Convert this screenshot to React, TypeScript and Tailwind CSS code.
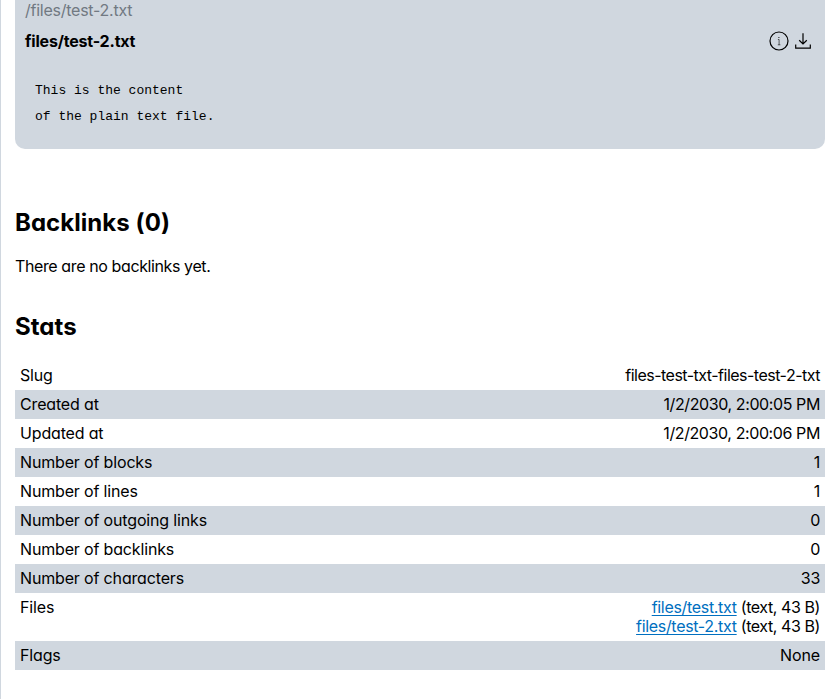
import type { ReactNode } from "react";

type Row = { label: string; value: ReactNode; spacing?: string };

function FileLink({ name }: { name: string }) {
  return (
    <div className="tracking-[-0.42px]">
      <span className="tracking-[-0.32px] text-[#006fc0] underline decoration-1 underline-offset-2">{name}</span> (text, 43 B)
    </div>
  );
}

const rows: Row[] = [
  { label: "Slug", value: "files-test-txt-files-test-2-txt", spacing: "tracking-[-0.51px]" },
  { label: "Created at", value: "1/2/2030, 2:00:05 PM", spacing: "tracking-[-0.4px]" },
  { label: "Updated at", value: "1/2/2030, 2:00:06 PM", spacing: "tracking-[-0.4px]" },
  { label: "Number of blocks", value: "1" },
  { label: "Number of lines", value: "1" },
  { label: "Number of outgoing links", value: "0" },
  { label: "Number of backlinks", value: "0" },
  { label: "Number of characters", value: "33" },
  {
    label: "Files",
    value: (
      <>
        <FileLink name="files/test.txt" />
        <FileLink name="files/test-2.txt" />
      </>
    ),
  },
  { label: "Flags", value: "None", spacing: "tracking-[-0.1px]" },
];

function InfoIcon() {
  return (
    <svg className="size-5" viewBox="0 0 20 20" fill="none" stroke="#000">
      <circle cx="10" cy="10" r="9" strokeWidth="1.2" />
      <path d="M8.9 8.5h1.2v5.3M8.8 13.8h2.6" strokeWidth="0.6" />
      <circle cx="9.9" cy="6.5" r="0.6" fill="#000" stroke="none" />
    </svg>
  );
}

function DownloadIcon() {
  return (
    <svg className="h-5 w-4" viewBox="0 0 16 20" fill="none" stroke="#000" strokeWidth="1.2">
      <path d="M8 2.2v10.6M4.2 9.2L8 12.9l3.8-3.7M.7 13.5v3.7h14.6v-3.7" />
    </svg>
  );
}

export default function App() {
  return (
    <main className="flex h-[699px] w-[840px] flex-col border-l border-[#d0d7df] bg-white pr-[15px] pl-[14px] font-['Inter',sans-serif] text-base leading-[19px] tracking-[-0.32px] text-black [font-feature-settings:'cv11']">
      <section className="h-[149px] shrink-0 rounded-b-[10px] bg-[#d0d7df] px-[10px] pt-px">
        <div className="tracking-[-0.25px] text-[#717982]">/files/test-2.txt</div>
        <div className="mt-[11px] flex h-5 items-center justify-between pr-1">
          <div className="font-bold tracking-[-0.2px]">files/test-2.txt</div>
          <div className="flex gap-[6px]">
            <InfoIcon />
            <DownloadIcon />
          </div>
        </div>
        <pre className="mt-[27px] pl-[10px] font-['Liberation_Mono',monospace] text-[13px] leading-[26px] tracking-normal">{"This is the content\nof the plain text file."}</pre>
      </section>
      <h2 className="mt-[59px] text-2xl leading-[30px] font-bold tracking-[0.05px]">Backlinks (0)</h2>
      <p className="mt-[19px] tracking-[-0.39px]">There are no backlinks yet.</p>
      <h2 className="mt-9 text-2xl leading-[30px] font-bold tracking-[0.05px]">Stats</h2>
      <dl className="mt-[19px]">
        {rows.map((row) => (
          <div key={row.label} className="flex justify-between p-[5px] even:bg-[#d0d7df]">
            <dt className="tracking-[-0.16px]">{row.label}</dt>
            <dd className={`text-right ${row.spacing ?? ""}`}>{row.value}</dd>
          </div>
        ))}
      </dl>
    </main>
  );
}
